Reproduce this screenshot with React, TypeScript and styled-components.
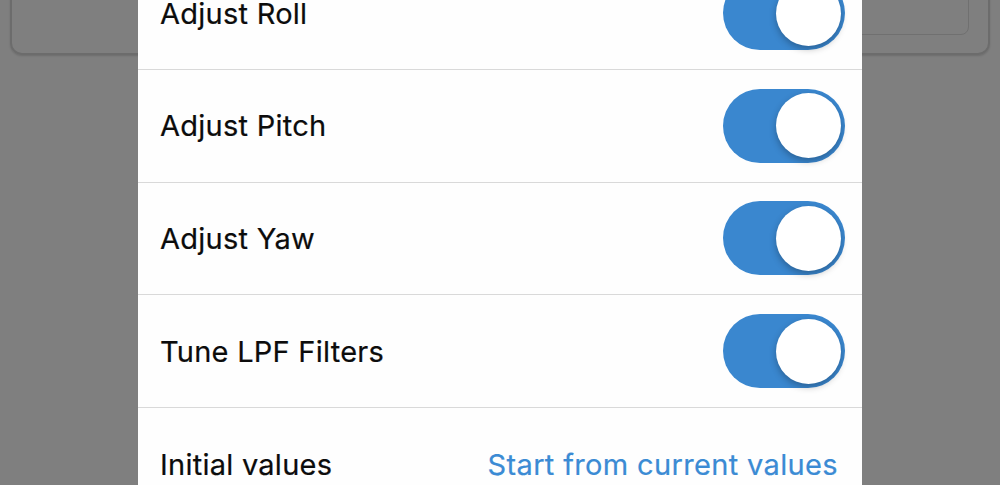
import React, { useState } from "react";
import styled, { createGlobalStyle } from "styled-components";

const GlobalStyle = createGlobalStyle`
  html, body {
    margin: 0;
    padding: 0;
    background: #7f7f7f;
    font-family: Inter, "Liberation Sans", sans-serif;
    -webkit-font-smoothing: antialiased;
  }
`;

const Page = styled.div`
  position: relative;
  width: 1000px;
  height: 485px;
  overflow: hidden;
  background: #7f7f7f;
`;

// the screen behind the dimmed overlay
const BackCard = styled.div`
  margin: -40px 10px 0 10px;
  height: 95px;
  box-sizing: border-box;
  border: 2px solid #6c6c6c;
  border-radius: 12px;
  box-shadow: 0 1px 2px rgba(0, 0, 0, 0.15);
  display: flex;
  justify-content: flex-end;
  padding: 0 19px 18px 0;
`;

const BackInner = styled.div`
  width: 600px;
  height: 100%;
  box-sizing: border-box;
  border: 1.5px solid #707070;
  border-radius: 8px;
`;

const Sheet = styled.div`
  position: absolute;
  top: -42.67px;
  left: 138px;
  width: 724px;
  background: #fefefe;
`;

const Row = styled.div<{ $last?: boolean }>`
  height: 112.67px;
  box-sizing: border-box;
  display: flex;
  align-items: center;
  justify-content: space-between;
  padding: 0 17px 0 22px;
  border-bottom: ${(p) => (p.$last ? "none" : "1px solid #d9d9d9")};
`;

const Label = styled.span`
  font-size: 29px;
  color: #0c0c0c;
  letter-spacing: 0.25px;
  -webkit-text-stroke: 0.2px #0c0c0c;
`;

const LinkText = styled.span`
  font-size: 29px;
  color: #3b8bd4;
  margin-right: 7px;
  letter-spacing: 0.35px;
  -webkit-text-stroke: 0.2px #3b8bd4;
`;

const Track = styled.button<{ $on: boolean }>`
  position: relative;
  width: 122px;
  height: 74px;
  border: none;
  padding: 0;
  border-radius: 37px;
  background: ${(p) => (p.$on ? "#3a87cf" : "#e4e4e4")};
  cursor: pointer;
`;

const Knob = styled.span<{ $on: boolean }>`
  position: absolute;
  top: 4.5px;
  left: ${(p) => (p.$on ? "53px" : "5px")};
  width: 65px;
  height: 65px;
  border-radius: 50%;
  background: #ffffff;
  box-shadow: 0 3px 7px rgba(0, 0, 0, 0.28);
`;

const Toggle = ({ on, onClick }: { on: boolean; onClick: () => void }) => (
  <Track $on={on} onClick={onClick}>
    <Knob $on={on} />
  </Track>
);

const options = ["Adjust Roll", "Adjust Pitch", "Adjust Yaw", "Tune LPF Filters"];

export default function App() {
  const [flags, setFlags] = useState<boolean[]>([true, true, true, true]);

  const flip = (i: number) =>
    setFlags((prev) => prev.map((v, j) => (j === i ? !v : v)));

  return (
    <Page>
      <GlobalStyle />
      <BackCard>
        <BackInner />
      </BackCard>
      <Sheet>
        {options.map((name, i) => (
          <Row key={name}>
            <Label>{name}</Label>
            <Toggle on={flags[i]} onClick={() => flip(i)} />
          </Row>
        ))}
        <Row $last>
          <Label>Initial values</Label>
          <LinkText>Start from current values</LinkText>
        </Row>
      </Sheet>
    </Page>
  );
}
